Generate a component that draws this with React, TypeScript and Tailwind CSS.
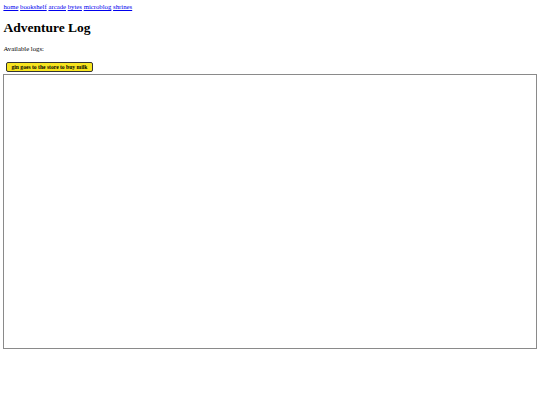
export default function App() {
  const links = ['home', 'bookshelf', 'arcade', 'bytes', 'microblog', 'shrines']

  return (
    <div className="min-h-[405px] bg-white p-[3.4px] text-black" style={{ fontFamily: '"Liberation Serif", "Times New Roman", serif' }}>
      {/* nav */}
      <nav className="text-[6.75px] leading-[7.8px]">
        {links.map((l, i) => (
          <span key={l}>
            <a href="#" className="text-[#0000ee] underline">
              {l}
            </a>
            {i < links.length - 1 ? ' ' : ''}
          </span>
        ))}
      </nav>

      <h1 className="mt-[9px] text-[13.5px] font-bold leading-[15.5px]">Adventure Log</h1>

      <p className="mt-[9px] text-[6.75px] leading-[7.8px]">Available logs:</p>

      <div className="mt-[9.5px] flex">
        <button className="ml-[2.6px] h-[10px] rounded-[2px] border border-[#333] bg-[#f7e41f] px-[4.5px] text-[5.6px] font-bold leading-[8px]">
          gin goes to the store to buy milk
        </button>
      </div>

      <div className="mt-[2px] h-[275px] w-full border border-[#8a8a8a]" />
    </div>
  )
}
